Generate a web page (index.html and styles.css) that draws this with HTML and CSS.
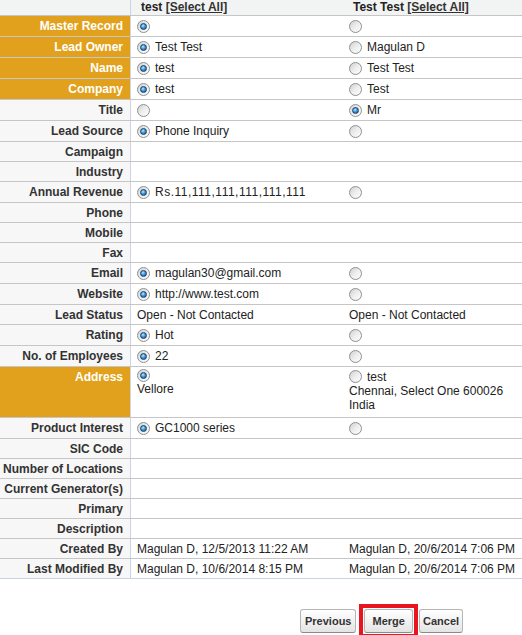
FILE: index.html
```html
<!DOCTYPE html>
<html>
<head>
<meta charset="utf-8">
<title>Merge Leads</title>
<link rel="stylesheet" href="styles.css">
</head>
<body>
<div class="grid">
  <div class="row head">
    <div class="lbl"></div>
    <div class="val"><b>test</b>&nbsp;<a href="#" class="sel">[Select All]</a></div>
    <div class="val"><b>Test Test</b>&nbsp;<a href="#" class="sel">[Select All]</a></div>
  </div>
  <div class="row hl">
    <div class="lbl">Master Record</div>
    <div class="val"><span class="radio on"></span></div>
    <div class="val"><span class="radio"></span></div>
  </div>
  <div class="row hl">
    <div class="lbl">Lead Owner</div>
    <div class="val"><span class="radio on"></span>Test Test</div>
    <div class="val"><span class="radio"></span>Magulan D</div>
  </div>
  <div class="row hl">
    <div class="lbl">Name</div>
    <div class="val"><span class="radio on"></span>test</div>
    <div class="val"><span class="radio"></span>Test Test</div>
  </div>
  <div class="row hl">
    <div class="lbl">Company</div>
    <div class="val"><span class="radio on"></span>test</div>
    <div class="val"><span class="radio"></span>Test</div>
  </div>
  <div class="row">
    <div class="lbl">Title</div>
    <div class="val"><span class="radio"></span></div>
    <div class="val"><span class="radio on"></span>Mr</div>
  </div>
  <div class="row">
    <div class="lbl">Lead Source</div>
    <div class="val"><span class="radio on"></span>Phone Inquiry</div>
    <div class="val"><span class="radio"></span></div>
  </div>
  <div class="row short">
    <div class="lbl">Campaign</div>
    <div class="val"></div>
    <div class="val"></div>
  </div>
  <div class="row short">
    <div class="lbl">Industry</div>
    <div class="val"></div>
    <div class="val"></div>
  </div>
  <div class="row">
    <div class="lbl">Annual Revenue</div>
    <div class="val"><span class="radio on"></span><span class="num">Rs.11,111,111,111,111,111</span></div>
    <div class="val"><span class="radio"></span></div>
  </div>
  <div class="row short">
    <div class="lbl">Phone</div>
    <div class="val"></div>
    <div class="val"></div>
  </div>
  <div class="row short">
    <div class="lbl">Mobile</div>
    <div class="val"></div>
    <div class="val"></div>
  </div>
  <div class="row short">
    <div class="lbl">Fax</div>
    <div class="val"></div>
    <div class="val"></div>
  </div>
  <div class="row">
    <div class="lbl">Email</div>
    <div class="val"><span class="radio on"></span>magulan30@gmail.com</div>
    <div class="val"><span class="radio"></span></div>
  </div>
  <div class="row">
    <div class="lbl">Website</div>
    <div class="val"><span class="radio on"></span>http://www.test.com</div>
    <div class="val"><span class="radio"></span></div>
  </div>
  <div class="row short">
    <div class="lbl">Lead Status</div>
    <div class="val">Open - Not Contacted</div>
    <div class="val">Open - Not Contacted</div>
  </div>
  <div class="row">
    <div class="lbl">Rating</div>
    <div class="val"><span class="radio on"></span>Hot</div>
    <div class="val"><span class="radio"></span></div>
  </div>
  <div class="row">
    <div class="lbl">No. of Employees</div>
    <div class="val"><span class="radio on"></span>22</div>
    <div class="val"><span class="radio"></span></div>
  </div>
  <div class="row hl tall">
    <div class="lbl">Address</div>
    <div class="val">
      <div class="line first-a"><span class="radio on"></span></div>
      <div class="line">Vellore</div>
    </div>
    <div class="val">
      <div class="line first-b"><span class="radio"></span>test</div>
      <div class="line">Chennai, Select One 600026</div>
      <div class="line">India</div>
    </div>
  </div>
  <div class="row">
    <div class="lbl">Product Interest</div>
    <div class="val"><span class="radio on"></span>GC1000 series</div>
    <div class="val"><span class="radio"></span></div>
  </div>
  <div class="row short">
    <div class="lbl">SIC Code</div>
    <div class="val"></div>
    <div class="val"></div>
  </div>
  <div class="row short">
    <div class="lbl">Number of Locations</div>
    <div class="val"></div>
    <div class="val"></div>
  </div>
  <div class="row short">
    <div class="lbl">Current Generator(s)</div>
    <div class="val"></div>
    <div class="val"></div>
  </div>
  <div class="row short">
    <div class="lbl">Primary</div>
    <div class="val"></div>
    <div class="val"></div>
  </div>
  <div class="row short">
    <div class="lbl">Description</div>
    <div class="val"></div>
    <div class="val"></div>
  </div>
  <div class="row short">
    <div class="lbl">Created By</div>
    <div class="val">Magulan D, 12/5/2013 11:22 AM</div>
    <div class="val">Magulan D, 20/6/2014 7:06 PM</div>
  </div>
  <div class="row short last">
    <div class="lbl">Last Modified By</div>
    <div class="val">Magulan D, 10/6/2014 8:15 PM</div>
    <div class="val">Magulan D, 20/6/2014 7:06 PM</div>
  </div>
</div>
<div class="buttons">
  <input type="button" class="btn btn-prev" value="Previous">
  <span class="mark"><input type="button" class="btn btn-merge" value=" Merge "></span>
  <input type="button" class="btn btn-cancel" value="Cancel">
</div>
</body>
</html>
```
FILE: styles.css
```css
html, body {
  margin: 0;
  padding: 0;
  background: #fff;
}
body {
  font-family: "Liberation Sans", Arial, sans-serif;
  font-size: 12px;
  color: #222;
  width: 522px;
}
.grid {
  display: flex;
  flex-direction: column;
}
.row {
  display: grid;
  grid-template-columns: 131px 212px 1fr;
  height: 21px;
  box-sizing: border-box;
  border-bottom: 1px solid #c6c6c6;
}
.row.short {
  height: 20px;
}
.row.head {
  height: 16px;
  background: #f2f3f3;
}
.row.tall {
  height: 51px;
}
.row.last {
  border-bottom-color: #cbd3e1;
}
.lbl {
  box-sizing: border-box;
  border-right: 1px solid #cdd4e4;
  background: #f7f7f7;
  color: #333;
  font-weight: bold;
  display: flex;
  align-items: center;
  justify-content: flex-end;
  padding-right: 7px;
  white-space: nowrap;
  line-height: 14px;
}
.head .lbl {
  background: #f2f3f3;
}
.hl .lbl {
  background: #e2a11c;
  color: #fff;
}
.val {
  display: flex;
  align-items: center;
  padding-left: 6px;
  white-space: nowrap;
  line-height: 14px;
}
.num {
  letter-spacing: 0.5px;
}
.head .val {
  padding-left: 10px;
  align-items: flex-start;
  padding-top: 0;
  color: #222;
}
.sel {
  color: #333;
  font-weight: bold;
  text-decoration: underline;
}
.tall .lbl {
  align-items: flex-start;
  padding-top: 3px;
}
.tall .val {
  flex-direction: column;
  align-items: flex-start;
  padding-top: 2px;
}
.line {
  display: flex;
  align-items: center;
  line-height: 14px;
}
.first-a {
  height: 13px;
}
.first-b {
  height: 15px;
}
.radio {
  flex: none;
  position: relative;
  width: 13px;
  height: 13px;
  box-sizing: border-box;
  border-radius: 50%;
  border: 1px solid #8d8f91;
  background: linear-gradient(135deg, #cfd0d1 0%, #eeeeee 50%, #fdfdfd 100%);
  margin-right: 5px;
}
.radio.on::after {
  content: "";
  position: absolute;
  left: 2px;
  top: 2px;
  width: 7px;
  height: 7px;
  box-sizing: border-box;
  border-radius: 50%;
  border: 1px solid #1f3f61;
  background: radial-gradient(circle at 40% 35%, #b6ebff 0%, #3b9ae0 45%, #0d4f8e 100%);
}
.buttons {
  display: flex;
  align-items: center;
  padding-left: 300px;
  margin-top: 25px;
}
.btn {
  font-family: "Liberation Sans", Arial, sans-serif;
  font-size: 11px;
  font-weight: bold;
  color: #333;
  height: 24px;
  box-sizing: border-box;
  border: 1px solid #b5b5b5;
  border-bottom-color: #8a8a8a;
  border-radius: 3px;
  background: linear-gradient(#ffffff, #efefef 60%, #e4e4e4);
  padding: 0 4px;
  margin: 0;
}
.btn-merge {
  padding: 0 4px;
}
.btn-cancel {
  padding: 0 3px;
  margin-left: 1px;
}
.mark {
  display: flex;
  border: 4px solid #e8141f;
  padding: 1px;
  margin-left: 3px;
}
```
